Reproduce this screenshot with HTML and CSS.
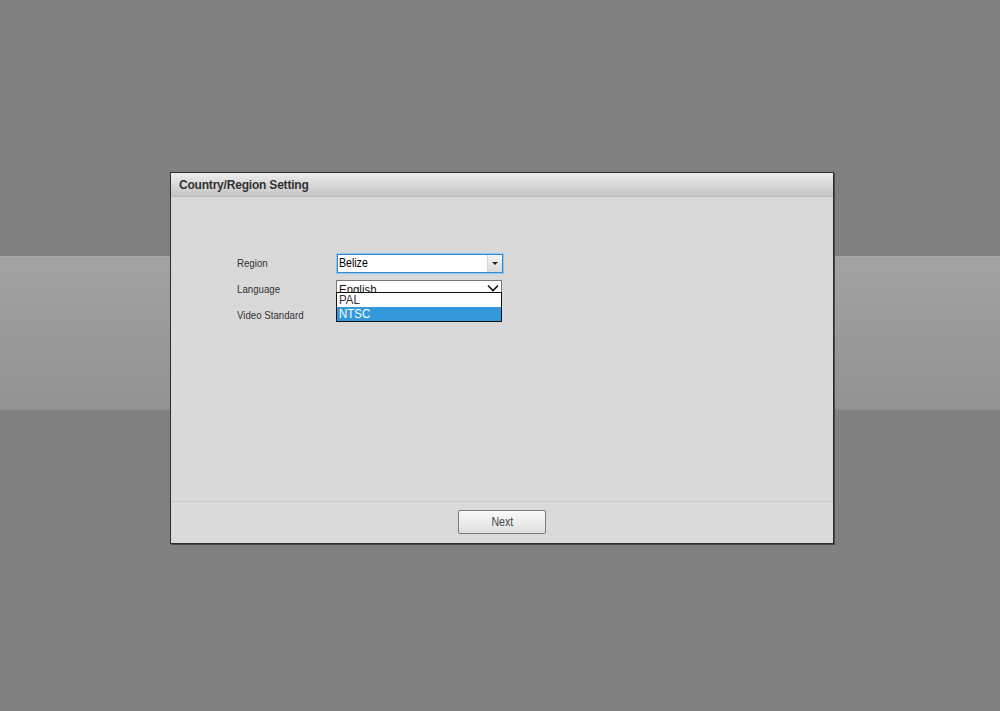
FILE: index.html
```html
<!DOCTYPE html>
<html>
<head>
    <title>Country/Region Setting</title>
    <link rel="stylesheet" href="styles.css">
</head>
<body>
    <div class="page">
        <div class="band"></div>

        <!-- 向导对话框 -->
        <div class="dialog">
            <div class="dialog-head">Country/Region Setting</div>
            <div class="dialog-body">
                <div class="form">
                    <div class="label"><span class="narrow">Region</span></div>
                    <div class="field">
                        <div class="combo">
                            <span class="combo-text"><span class="narrow">Belize</span></span>
                            <span class="combo-btn"><span class="tri"></span></span>
                        </div>
                    </div>

                    <div class="label"><span class="narrow">Language</span></div>
                    <div class="field">
                        <div class="select">
                            <span class="select-text"><span class="narrow">English</span></span>
                            <svg class="chev" width="12" height="8" viewBox="0 0 12 8">
                                <path d="M1 1.5 L6 6.5 L11 1.5" fill="none" stroke="#111" stroke-width="1.6"/>
                            </svg>
                        </div>
                        <!-- 展开的视频制式列表 -->
                        <div class="options">
                            <div class="option"><span class="narrow">PAL</span></div>
                            <div class="option selected"><span class="narrow">NTSC</span></div>
                        </div>
                    </div>

                    <div class="label"><span class="narrow">Video Standard</span></div>
                    <div class="field"></div>
                </div>
            </div>
            <div class="dialog-foot">
                <button class="btn"><span class="narrow">Next</span></button>
            </div>
        </div>
    </div>
</body>
</html>
```

FILE: styles.css
```css
html, body {
    margin: 0;
    padding: 0;
}
body {
    background: #808080;
    font-family: "Liberation Sans", Arial, sans-serif;
    font-size: 12px;
    color: #333;
}
.page {
    position: relative;
    width: 1000px;
    height: 711px;
    overflow: hidden;
}
.band {
    margin-top: 256px;
    height: 154px;
    background: linear-gradient(#a2a2a2, #929292);
    border-top: 1px solid #a8a8a8;
    border-bottom: 1px solid #8c8c8c;
    box-sizing: border-box;
}

/* 截图里的字体偏窄 */
.narrow {
    display: inline-block;
    transform: scaleX(0.88);
    transform-origin: left center;
    white-space: nowrap;
}

/* 对话框浮在背景之上 */
.dialog {
    position: absolute;
    left: 170px;
    top: 172px;
    width: 664px;
    height: 372px;
    box-sizing: border-box;
    border: 1px solid #2e2e2e;
    box-shadow: 1px 1px 0 #4a4a4a;
    background: #d9d9d9;
    display: flex;
    flex-direction: column;
}
.dialog-head {
    height: 24px;
    line-height: 24px;
    padding-left: 8px;
    font-weight: bold;
    color: #333;
    letter-spacing: -0.2px;
    background: linear-gradient(#ececec, #c6c6c6);
    border-bottom: 1px solid #bdbdbd;
    box-sizing: border-box;
}
.dialog-body {
    flex: 1;
    background: #d9d9d9;
    padding: 56px 0 0 66px;
}
.dialog-foot {
    height: 42px;
    border-top: 1px solid #c9c9c9;
    background: #dadada;
    display: flex;
    justify-content: center;
    padding-top: 8px;
    box-sizing: border-box;
}

.form {
    display: grid;
    grid-template-columns: 99px 168px;
    grid-auto-rows: 26px;
    align-items: start;
}
.label {
    line-height: 21px;
    font-size: 11px;
    color: #333;
}
.field {
    position: relative;
}

.combo {
    height: 21px;
    box-sizing: border-box;
    border: 1px solid #8cc8f4;
    box-shadow: inset 0 0 0 1px #3b86c8;
    background: #fff;
    display: flex;
    align-items: center;
    padding: 0 1px 0 2px;
}
.combo-text {
    flex: 1;
    color: #000;
    font-size: 12px;
    line-height: 17px;
}
.combo-btn {
    width: 15px;
    height: 17px;
    box-sizing: border-box;
    border-left: 1px solid #c8d8e8;
    background: linear-gradient(#f4f4f4, #dcdcdc);
    display: flex;
    align-items: center;
    justify-content: center;
}
.tri {
    width: 0;
    height: 0;
    border-left: 3px solid transparent;
    border-right: 3px solid transparent;
    border-top: 3px solid #222;
}

.select {
    margin-top: 1px;
    width: 166px;
    height: 17px;
    box-sizing: border-box;
    border: 1px solid #777;
    background: #fff;
    display: flex;
    align-items: flex-start;
    justify-content: space-between;
    padding: 0 2px 0 2px;
    overflow: hidden;
}
.select-text {
    color: #111;
    font-size: 13px;
    line-height: 17px;
}
.chev {
    margin-top: 3px;
}

.options {
    position: absolute;
    left: 0;
    top: 13px;
    width: 166px;
    box-sizing: border-box;
    border: 1px solid #111;
    background: #fff;
    z-index: 2;
}
.option {
    height: 14px;
    line-height: 14px;
    padding-left: 2px;
    font-size: 13px;
    color: #333;
}
.option.selected {
    background: #3399db;
    color: #fff;
}

.btn {
    width: 88px;
    height: 24px;
    font-family: "Liberation Sans", Arial, sans-serif;
    font-size: 12px;
    color: #444;
    background: linear-gradient(#fbfbfb, #dedede);
    border: 1px solid #7a7a7a;
    border-radius: 2px;
    padding: 0;
}
.btn .narrow {
    transform-origin: center;
}
```
